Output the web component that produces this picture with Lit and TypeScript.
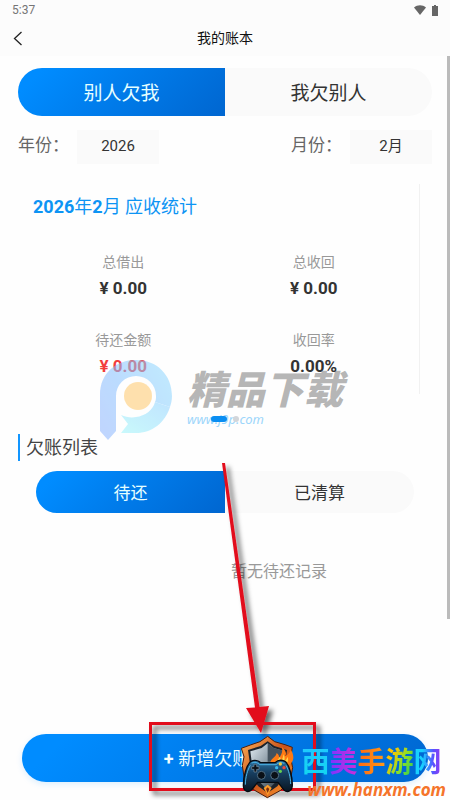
import { LitElement, html, svg, css } from "lit";
import { customElement, property, state } from "lit/decorators.js";
import { classMap } from "lit/directives/class-map.js";

const baseFont = css`
  :host {
    font-family: Roboto, "Noto Sans CJK SC", sans-serif;
  }
  button,
  select {
    font-family: inherit;
    border: 0;
    margin: 0;
    padding: 0;
    cursor: pointer;
  }
`;

@customElement("split-tabs")
class SplitTabs extends LitElement {
  @property({ type: Array }) labels: string[] = [];
  @property({ type: Boolean, reflect: true }) small = false;
  @state() private active = 0;

  static styles = [
    baseFont,
    css`
      :host {
        display: block;
      }
      .tabs {
        display: grid;
        grid-template-columns: 1fr 1fr;
        height: 48px;
        border-radius: 24px;
        overflow: hidden;
        background: #fafafa;
      }
      .tab {
        background: transparent;
        color: #333;
        font-size: 19px;
        padding-bottom: 2px;
      }
      .active {
        background: linear-gradient(135deg, #008cff 10%, #0066d0);
        color: #e6ffff;
      }
      :host([small]) .tabs {
        height: 42px;
        border-radius: 21px;
      }
      :host([small]) .tab {
        font-size: 17px;
      }
    `,
  ];

  render() {
    return html`<div class="tabs" role="tablist">
      ${this.labels.map(
        (label, i) => html`<button
          role="tab"
          aria-selected=${i === this.active}
          class=${classMap({ tab: true, active: i === this.active })}
          @click=${() => (this.active = i)}
        >${label}</button>`
      )}
    </div>`;
  }
}

@customElement("stat-card")
class StatCard extends LitElement {
  static styles = [
    baseFont,
    css`
      :host {
        display: block;
      }
      .card {
        margin-right: 12px;
        padding: 11px 10px 16px;
        border-right: 1px solid #f1f1f1;
      }
      .heading {
        margin: 0 0 33px 5px;
        font-size: 18px;
        line-height: 24px;
        font-weight: 400;
        color: #0d94f4;
      }
      .stats {
        display: grid;
        grid-template-columns: 1fr 1fr;
        row-gap: 30px;
        margin: 0;
        text-align: center;
      }
      .label {
        font-size: 14px;
        line-height: 20px;
        color: #999;
      }
      .value {
        margin: 4px 0 0;
        font-size: 17px;
        line-height: 24px;
        font-weight: 700;
        color: #333;
      }
      .due {
        color: #f23c3c;
      }
    `,
  ];

  private stats = [
    { label: "总借出", value: "¥ 0.00" },
    { label: "总收回", value: "¥ 0.00" },
    { label: "待还金额", value: "¥ 0.00", due: true },
    { label: "收回率", value: "0.00%" },
  ];

  render() {
    return html`<section class="card">
      <h2 class="heading"><b>2026</b>年<b>2</b>月 应收统计</h2>
      <dl class="stats">
        ${this.stats.map(
          (s) => html`<div>
            <dt class="label">${s.label}</dt>
            <dd class=${classMap({ value: true, due: !!s.due })}>${s.value}</dd>
          </div>`
        )}
      </dl>
    </section>`;
  }
}

@customElement("download-mark")
class DownloadMark extends LitElement {
  static styles = [
    baseFont,
    css`
      :host {
        display: flex;
        gap: 14px;
        pointer-events: none;
      }
      .logo {
        width: 74px;
        height: 84px;
        flex: none;
      }
      .words {
        padding-top: 10px;
        white-space: nowrap;
        font-style: italic;
      }
      .name {
        font-size: 39px;
        line-height: 44px;
        font-weight: 900;
        color: rgba(110, 110, 110, 0.5);
      }
      .site {
        font-family: "Noto Sans", sans-serif;
        font-size: 13px;
        line-height: 13px;
        color: #9dd6fb;
      }
    `,
  ];

  render() {
    return html`
      <svg class="logo" viewBox="0 0 74 84" aria-hidden="true">
        <defs>
          <linearGradient id="p" x1="0" y1="1" x2="1" y2="0.4">
            <stop offset="0" stop-color="#8fb4ff" />
            <stop offset="0.5" stop-color="#86c0ff" />
            <stop offset="1" stop-color="#8ed6ff" />
          </linearGradient>
          <linearGradient id="t" x1="0" y1="1" x2="1" y2="0">
            <stop offset="0" stop-color="#9ff6fb" />
            <stop offset="1" stop-color="#8ed0ff" />
          </linearGradient>
        </defs>
        <g opacity="0.55">
          <path
            fill="url(#p)"
            d="M1 36C1 14 17 1 37 1c21 0 36 15 36 36 0 4-1 8-2 11l-15-5c1-2 1-4 1-6a20 20 0 0 0-40 0v35l-8 9-8-9z"
          />
          <path
            fill="url(#t)"
            d="M71 48C66 64 53 74 37 74H22l7-9-7-9c5 2 10 3 15 2 9-1 17-7 19-15z"
          />
          <circle cx="39" cy="37" r="14" fill="#ffc96b" />
        </g>
      </svg>
      <div class="words">
        <div class="name">精品下载</div>
        <div class="site">www.j9p.com</div>
      </div>
    `;
  }
}

@customElement("game-badge")
class GameBadge extends LitElement {
  static styles = [
    baseFont,
    css`
      :host {
        display: flex;
        align-items: flex-end;
        pointer-events: none;
      }
      .shield {
        width: 75px;
        height: 68px;
        flex: none;
      }
      .words {
        margin-left: -8px;
        white-space: nowrap;
      }
      .name {
        display: flex;
        font-size: 28px;
        line-height: 34px;
        font-weight: 700;
      }
      .name span {
        background-clip: text;
        -webkit-background-clip: text;
        color: transparent;
      }
      .name .c1 {
        background-image: linear-gradient(#20c8ff, #10d8ee);
      }
      .name .c2 {
        background-image: linear-gradient(90deg, #7a35ff, #d22cd8);
      }
      .name .c3 {
        background-image: linear-gradient(90deg, #ff6a10, #ff9a18);
      }
      .name .c4 {
        background-image: linear-gradient(120deg, #ffc400 20%, #8ae028 55%, #18c860);
      }
      .name .c5 {
        background-image: linear-gradient(90deg, #18d0ff 30%, #5a50ff 70%, #9a38f0);
      }
      .site {
        margin-left: 6px;
        font-family: "Open Sans", sans-serif;
        font-size: 17px;
        line-height: 20px;
        font-weight: 700;
        font-style: italic;
        color: #f5742a;
      }
    `,
  ];

  render() {
    const dot = (x: number, y: number, c: string) =>
      svg`<circle cx=${x} cy=${y} r="5" fill=${c} />`;
    return html`
      <svg class="shield" viewBox="0 0 225 204" aria-hidden="true">
        <defs>
          <linearGradient id="rim" x1="0" y1="0" x2="1" y2="1">
            <stop offset="0" stop-color="#ffb45a" />
            <stop offset="0.5" stop-color="#c9521a" />
            <stop offset="1" stop-color="#ff9a2c" />
          </linearGradient>
          <linearGradient id="steel" x1="0" y1="0" x2="1" y2="1">
            <stop offset="0" stop-color="#e3edf4" />
            <stop offset="0.5" stop-color="#7f8e9a" />
            <stop offset="1" stop-color="#1d2830" />
          </linearGradient>
          <linearGradient id="pad" x1="0" y1="0" x2="0" y2="1">
            <stop offset="0" stop-color="#2d75a6" />
            <stop offset="0.4" stop-color="#173e60" />
            <stop offset="1" stop-color="#0a1622" />
          </linearGradient>
        </defs>
        <path
          fill="url(#rim)"
          stroke="#4a1d0c"
          stroke-width="3"
          d="M98 13l21 16 31 9 22 8-5 31 6 30-8 42-28 26-40 22-38-22-30-27-7-48 5-26-8-25 27-10 29-10z"
        />
        <path
          fill="#1b232c"
          d="M98 28l20 14 38 12-5 35v40l-24 34-29 20-28-20-26-34V89l-5-35 38-12z"
        />
        <path fill="url(#steel)" d="M98 34l18 14 34 10-4 31v36l-48 50-48-50V89l-4-31 34-10z" />
        <path fill="#43525e" d="M98 34l18 14 34 10-4 31H98z" />
        <path
          fill="#ff7a14"
          d="M106 92c2-14 17-16 19-29 7 5 7 9 7 14 7-7 13-20 8-33 11 9 16 19 11 28 8-3 15-9 16-20 11 19 11 34-2 45z"
        />
        <path
          fill="#ffd348"
          d="M121 92c2-8 11-9 13-18 4 4 3 9 3 11 5-2 8-10 8-18 5 7 5 16 2 20 5-1 8-6 11-13 3 10 1 17-5 20z"
        />
        <path
          fill="url(#pad)"
          stroke="#050b12"
          stroke-width="4"
          d="M48 88c11-5 23-2 29 4h43c7-7 19-9 30-4 13 10 22 46 22 70 0 19-14 26-26 15l-17-22H68l-18 22c-12 11-25 4-25-13 0-27 9-61 23-72z"
        />
        <path
          fill="none"
          stroke="#4bb4e6"
          stroke-width="3"
          d="M50 93c9-4 18-2 24 5h50c6-7 15-8 24-4M31 158c0-22 7-46 15-58M167 156c0-20-7-44-14-56"
        />
        <path fill="#0b1118" stroke="#7c91a0" stroke-width="2" d="M57 97h8v7h7v8h-7v8h-8v-8h-7v-8h7z" />
        <circle cx="79" cy="130" r="12" fill="#0a1017" stroke="#527186" stroke-width="3" />
        <circle cx="119" cy="130" r="12" fill="#0a1017" stroke="#527186" stroke-width="3" />
        ${dot(136, 96, "#f5c83a")} ${dot(125, 107, "#39b8ee")}
        ${dot(147, 107, "#ee4638")} ${dot(136, 118, "#64cf50")}
        <path fill="#ff9d28" d="M98 158l12 10-12 22-12-22z" />
        <path fill="#7e2c10" d="M98 166l5 5-5 12-5-12z" />
      </svg>
      <div class="words">
        <div class="name">
          <span class="c1">西</span><span class="c2">美</span><span class="c3">手</span
          ><span class="c4">游</span><span class="c5">网</span>
        </div>
        <div class="site">www.hanxm.com</div>
      </div>
    `;
  }
}

@customElement("app-root")
class AppRoot extends LitElement {
  static styles = [
    baseFont,
    css`
      :host {
        display: flex;
        flex-direction: column;
        position: relative;
        min-height: 100vh;
        overflow: hidden;
        background: #fefefe;
        color: #333;
      }
      .status {
        display: flex;
        align-items: center;
        justify-content: space-between;
        height: 20px;
        padding: 0 12px;
        background: #fcfcfc;
        color: #757575;
        font-size: 12px;
      }
      .indicators {
        display: flex;
        align-items: center;
        gap: 6px;
      }
      .indicators svg {
        display: block;
      }
      .nav {
        display: grid;
        grid-template-columns: 36px 1fr 36px;
        align-items: center;
        height: 36px;
        background: #fcfcfc;
      }
      .back {
        height: 36px;
        background: transparent;
        display: grid;
        place-items: center;
      }
      .title {
        margin: 0;
        text-align: center;
        font-size: 14px;
        line-height: 20px;
        font-weight: 400;
        color: #111;
      }
      .content {
        flex: 1;
        position: relative;
        padding: 12px 18px;
      }
      .scrollbar {
        position: absolute;
        top: 0;
        right: 0;
        width: 3px;
        height: 83%;
        background: #bbb;
      }
      .filters {
        display: flex;
        justify-content: space-between;
        margin: 14px 0 20px;
      }
      .filter {
        display: flex;
        align-items: center;
        gap: 8px;
        font-size: 17px;
        line-height: 30px;
        color: #666;
        align-items: flex-start;
      }
      .picker {
        appearance: none;
        width: 82px;
        height: 34px;
        padding-bottom: 2px;
        background: #fafafa;
        color: #333;
        font-size: 15px;
        text-align: center;
        text-align-last: center;
      }
      .dots {
        display: flex;
        justify-content: center;
        align-items: center;
        gap: 6px;
        height: 6px;
        margin: 22px 0 12px;
        position: relative;
        z-index: 1;
      }
      .dot {
        width: 6px;
        height: 6px;
        border-radius: 3px;
        background: #d2d6da;
      }
      .current {
        width: 16px;
        background: #0a8ef2;
      }
      .section {
        margin: 0 0 10px;
        padding-left: 6px;
        border-left: 2px solid #1296ff;
        font-size: 18px;
        line-height: 27px;
        font-weight: 400;
        color: #444;
      }
      .list-tabs {
        margin: 0 18px;
      }
      .empty {
        margin: 47px 0 0;
        padding-left: 108px;
        text-align: center;
        font-size: 16px;
        line-height: 24px;
        color: #999;
      }
      .footer {
        padding: 0 22px 18px;
      }
      .add {
        width: 100%;
        height: 48px;
        padding-bottom: 2px;
        border-radius: 24px;
        background: linear-gradient(135deg, #008cff 10%, #0066d0);
        box-shadow: 0 2px 6px rgba(0, 140, 255, 0.14);
        color: #f0ffff;
        font-size: 18px;
      }
      .download {
        position: absolute;
        top: 359px;
        left: 50%;
        margin-left: -126px;
      }
      .pointer {
        position: absolute;
        left: 50%;
        bottom: 0;
        margin-left: -85px;
        width: 190px;
        height: 350px;
        pointer-events: none;
      }
      .badge {
        position: absolute;
        right: 4px;
        bottom: 0;
      }
    `,
  ];

  render() {
    return html`
      <div class="status">
        <span>5:37</span>
        <span class="indicators">
          <svg width="12" height="10" viewBox="0 0 12 10" aria-hidden="true">
            <path fill="#666" d="M0 2.6C3.500-.6 8.500-.6 12 2.600L6 10z" />
          </svg>
          <svg width="6" height="11" viewBox="0 0 6 11" aria-hidden="true">
            <path fill="#666" d="M2 0h2v1h2v10H0V1h2z" />
          </svg>
        </span>
      </div>
      <header class="nav">
        <button class="back" aria-label="返回">
          <svg width="10" height="15" viewBox="0 0 10 15" aria-hidden="true">
            <path d="M8.500 1L1.500 7.500L8.500 14" fill="none" stroke="#222" stroke-width="1.300" />
          </svg>
        </button>
        <h1 class="title">我的账本</h1>
      </header>
      <main class="content">
        <split-tabs .labels=${["别人欠我", "我欠别人"]}></split-tabs>
        <div class="filters">
          <label class="filter">年份：<select class="picker"><option>2026</option></select></label>
          <label class="filter">月份：<select class="picker"><option>2月</option></select></label>
        </div>
        <stat-card></stat-card>
        <div class="dots"><span class="dot current"></span><span class="dot"></span></div>
        <h2 class="section">欠账列表</h2>
        <split-tabs class="list-tabs" small .labels=${["待还", "已清算"]}></split-tabs>
        <p class="empty">暂无待还记录</p>
        <div class="scrollbar"></div>
      </main>
      <footer class="footer">
        <button class="add"><b>+</b> 新增欠账记录</button>
      </footer>
      <download-mark class="download"></download-mark>
      <svg class="pointer" viewBox="0 0 190 350" aria-hidden="true">
        <defs>
          <filter id="shade" x="-20%" y="-20%" width="150%" height="150%">
            <feDropShadow dx="4" dy="4" stdDeviation="2.500" flood-color="#000" flood-opacity="0.6" />
          </filter>
        </defs>
        <g filter="url(#shade)">
          <rect x="10.500" y="273.500" width="164" height="66" fill="none" stroke="#e20d1c" stroke-width="3" />
          <path fill="#e20d1c" d="M82 13l3 0L119.500 257l9.500-1-8 27-15-25 9-.5z" />
        </g>
      </svg>
      <game-badge class="badge"></game-badge>
    `;
  }
}
